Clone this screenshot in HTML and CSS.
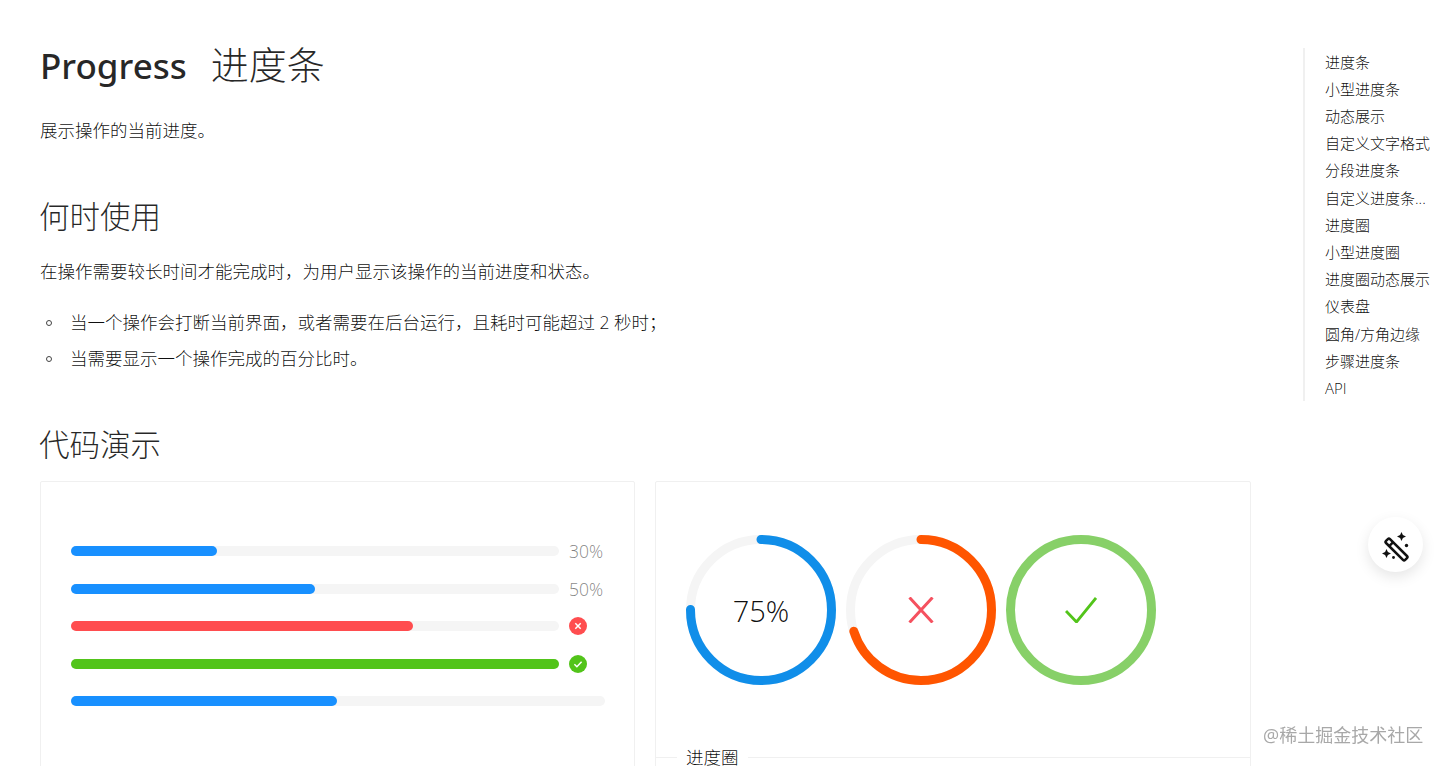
FILE: index.html
```html
<!DOCTYPE html>
<html lang="zh-CN">
<head>
<meta charset="UTF-8" />
<meta name="viewport" content="width=device-width, initial-scale=1" />
<title>Progress 进度条</title>
<link rel="stylesheet" href="styles.css">
</head>
<body>

<div class="page">

  <!-- Main article -->
  <main class="article">
    <h1><span class="title-en">Progress</span><span class="title-zh">进度条</span></h1>
    <p class="intro">展示操作的当前进度。</p>

    <h2 class="when">何时使用</h2>
    <p class="usage">在操作需要较长时间才能完成时，为用户显示该操作的当前进度和状态。</p>
    <ul>
      <li>当一个操作会打断当前界面，或者需要在后台运行，且耗时可能超过 2 秒时；</li>
      <li>当需要显示一个操作完成的百分比时。</li>
    </ul>

    <h2 class="demo-title">代码演示</h2>

    <div class="demos">
      <section class="card">
        <div class="card-body bars">
          <div class="bar-row">
            <div class="track"><div class="fill blue" style="width:30%"></div></div>
            <span class="bar-text">30%</span>
          </div>
          <div class="bar-row">
            <div class="track"><div class="fill blue" style="width:50%"></div></div>
            <span class="bar-text">50%</span>
          </div>
          <div class="bar-row">
            <div class="track"><div class="fill red" style="width:70%"></div></div>
            <svg class="status" viewBox="0 0 18 18">
              <circle cx="9" cy="9" r="9" fill="#ff4d4f" />
              <path d="M6.3 6.3l5.4 5.4M11.7 6.3l-5.4 5.4" stroke="#fff" stroke-width="1.5" fill="none" />
            </svg>
          </div>
          <div class="bar-row">
            <div class="track"><div class="fill green" style="width:100%"></div></div>
            <svg class="status" viewBox="0 0 18 18">
              <circle cx="9" cy="9" r="9" fill="#52c41a" />
              <path d="M5.4 9.2l2.5 2.5 4.7-5" stroke="#fff" stroke-width="1.5" fill="none" />
            </svg>
          </div>
          <div class="bar-row">
            <div class="track wide"><div class="fill blue" style="width:49.8%"></div></div>
          </div>
        </div>
      </section>

      <section class="card">
        <div class="card-body circles">
          <div class="circle">
            <svg viewBox="0 0 100 100">
              <circle class="ring-trail" cx="50" cy="50" r="47" />
              <circle class="ring" cx="50" cy="50" r="47" stroke="#108ee9" transform="rotate(-90 50 50)" style="stroke-dasharray:221.5 295.3" />
            </svg>
            <span class="circle-text">75%</span>
          </div>
          <div class="circle">
            <svg viewBox="0 0 100 100">
              <circle class="ring-trail" cx="50" cy="50" r="47" />
              <circle class="ring" cx="50" cy="50" r="47" stroke="#ff5500" transform="rotate(-90 50 50)" style="stroke-dasharray:206.7 295.3" />
            </svg>
            <svg class="circle-icon" viewBox="0 0 26 26">
              <path d="M1.5 0.5l23 25M24.5 0.5l-23 25" stroke="#f5515f" stroke-width="3" fill="none" />
            </svg>
          </div>
          <div class="circle">
            <svg viewBox="0 0 100 100">
              <circle class="ring" cx="50" cy="50" r="47" stroke="#87d068" />
            </svg>
            <svg class="circle-icon check" viewBox="0 0 32 26">
              <path d="M1 14l10.5 11L31 1" stroke="#52c41a" stroke-width="2.8" fill="none" />
            </svg>
          </div>
        </div>
        <div class="card-title">进度圈</div>
      </section>
    </div>
  </main>

  <!-- Anchor nav -->
  <nav class="anchor">
    <a>进度条</a>
    <a>小型进度条</a>
    <a>动态展示</a>
    <a>自定义文字格式</a>
    <a>分段进度条</a>
    <a>自定义进度条...</a>
    <a>进度圈</a>
    <a>小型进度圈</a>
    <a>进度圈动态展示</a>
    <a>仪表盘</a>
    <a>圆角/方角边缘</a>
    <a>步骤进度条</a>
    <a>API</a>
  </nav>

</div>

<button class="float-btn" type="button" aria-label="theme">
  <svg viewBox="0 0 34 34" width="34" height="34">
    <g transform="rotate(-45 17.5 21.5)">
      <rect x="14.7" y="8" width="5.600" height="27" rx="1.500" fill="none" stroke="#111" stroke-width="2.500" />
      <path d="M14.700 14h5.600" stroke="#111" stroke-width="2.500" />
    </g>
    <path d="M22.500 4l1.400 3.100 3.100 1.400-3.100 1.400-1.400 3.100-1.400-3.100-3.100-1.400 3.100-1.400zM7.500 21l1.400 3.100 3.100 1.400-3.100 1.400-1.400 3.100-1.400-3.100-3.100-1.400 3.100-1.400z" fill="#111" />
    <circle cx="27.500" cy="17.500" r="1.700" fill="#111" />
    <circle cx="14.500" cy="29.500" r="1.400" fill="#111" />
  </svg>
</button>

<div class="watermark">@稀土掘金技术社区</div>

</body>
</html>
```

FILE: styles.css
```css
html, body {
  margin: 0;
  height: 100%;
  overflow: hidden;
}
body {
  background: #fff;
  color: rgba(0,0,0,0.95);
  font-family: "Open Sans", "Noto Sans CJK SC", sans-serif;
  font-size: 17.5px;
  font-weight: 300;
}
.page {
  display: flex;
  align-items: flex-start;
}
.article {
  width: 1211px;
  margin-left: 40px;
  flex: none;
}
h1 {
  margin: 37px 0 0;
  font-size: 38px;
  line-height: 54px;
  font-weight: 400;
  color: rgba(0,0,0,0.85);
}
.title-en {
  font-family: "Noto Sans", sans-serif;
  font-weight: 500;
  font-size: 35px;
}
.title-zh {
  margin-left: 24px;
  font-weight: 300;
}
.intro {
  margin: 22px 0 0;
  line-height: 30px;
}
h2 {
  margin: 0 0 0 -1px;
  font-size: 30.5px;
  line-height: 45px;
  font-weight: 300;
  color: rgba(0,0,0,0.85);
}
.when {
  margin-top: 49px;
}
.usage {
  margin: 17px 0 0;
  line-height: 30px;
}
ul {
  margin: 21px 0 0;
  padding: 0 0 0 30px;
  list-style: none;
}
li {
  line-height: 30px;
  margin-bottom: 6px;
}
li::before {
  content: "";
  display: inline-block;
  box-sizing: border-box;
  width: 6px;
  height: 6px;
  margin: 0 18px 2px -24px;
  border: 1px solid #444;
  border-radius: 50%;
  vertical-align: middle;
}
.demo-title {
  margin-top: 49px;
}
.demos {
  display: grid;
  grid-template-columns: 595px 596px;
  gap: 20px;
  margin-top: 14px;
}
.card {
  border: 1px solid #f0f0f0;
  border-radius: 2px;
  height: 400px;
}
.bars {
  padding: 50.4px 30px 0;
}
.bar-row {
  display: flex;
  align-items: center;
  height: 37.5px;
}
.track {
  width: 488px;
  height: 10px;
  border-radius: 10px;
  background: #f5f5f5;
  flex: none;
}
.track.wide {
  width: 534px;
}
.fill {
  height: 100%;
  border-radius: 10px;
}
.blue { background: #1890ff; }
.red { background: #ff4d4f; }
.green { background: #52c41a; }
.bar-text {
  margin-left: 10px;
  color: rgba(0,0,0,0.5);
}
.status {
  width: 18px;
  height: 18px;
  margin-left: 10px;
}
.circles {
  display: flex;
  gap: 10px;
  padding: 53px 30px 0;
  height: 209px;
}
.circle {
  position: relative;
  width: 150px;
  height: 150px;
}
.circle > svg:first-child {
  display: block;
  width: 150px;
  height: 150px;
}
.ring-trail {
  fill: none;
  stroke: #f5f5f5;
  stroke-width: 6;
}
.ring {
  fill: none;
  stroke-width: 6;
  stroke-linecap: round;
}
.circle-text {
  position: absolute;
  inset: 0;
  display: flex;
  align-items: center;
  justify-content: center;
  font-size: 29px;
}
.circle-icon {
  position: absolute;
  left: 62px;
  top: 62px;
  width: 26px;
  height: 26px;
}
.circle-icon.check {
  left: 59px;
  width: 32px;
}
.card-title {
  display: flex;
  align-items: center;
  line-height: 26px;
  gap: 9px;
}
.card-title::before {
  content: "";
  width: 21px;
  border-top: 1px solid #f0f0f0;
}
.card-title::after {
  content: "";
  flex: 1;
  border-top: 1px solid #f0f0f0;
}
.anchor {
  display: flex;
  flex-direction: column;
  margin: 48px 0 0 52px;
  padding-left: 20px;
  border-left: 2px solid #f0f0f0;
  width: 118px;
  flex: none;
  font-size: 15px;
}
.anchor a {
  height: 27.2px;
  line-height: 27.2px;
  white-space: nowrap;
  position: relative;
  top: 0.7px;
}
.float-btn {
  position: fixed;
  left: 1368px;
  top: 517px;
  width: 55px;
  height: 55px;
  padding: 0;
  border: none;
  border-radius: 50%;
  background: #fff;
  box-shadow: 0 5px 14px rgba(0,0,0,0.1);
  display: flex;
  align-items: center;
  justify-content: center;
}
.watermark {
  position: fixed;
  left: 1263px;
  top: 722px;
  font-size: 18px;
  line-height: 26px;
  font-weight: 400;
  color: #a8a8a8;
}
```
